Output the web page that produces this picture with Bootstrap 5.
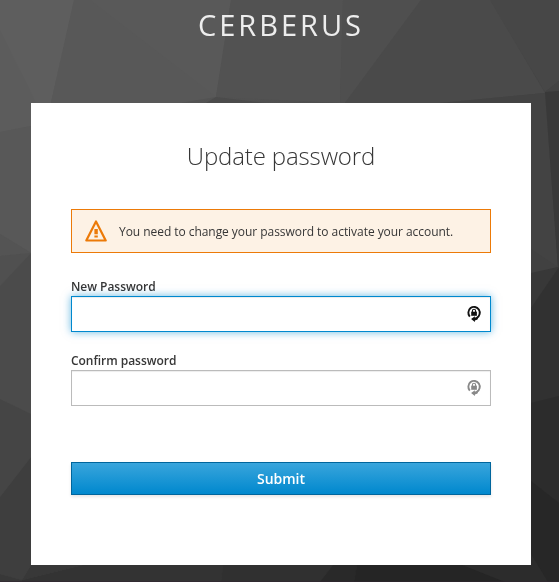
<!DOCTYPE html>
<html lang="en">
<head>
<meta charset="utf-8">
<meta name="viewport" content="width=device-width, initial-scale=1">
<title>Cerberus - Update password</title>
<link href="https://cdn.jsdelivr.net/npm/bootstrap@5.3.0/dist/css/bootstrap.min.css" rel="stylesheet">
<style>
body{font-family:"Open Sans",sans-serif;font-size:12px;line-height:20px;color:#363636;background:#4b4b4b;height:582px;overflow:hidden}
.backdrop{z-index:-1}
.brand{height:103px;padding-top:5px;padding-left:3px;font-size:29px;line-height:40px;letter-spacing:3px;color:#ededed;font-weight:400}
.login-card{width:500px;height:462px;margin-left:31px;padding:40px}
.login-title{font-size:24px;line-height:26px;font-weight:300;letter-spacing:-.14px;margin-bottom:40px;color:#363636}
.notice{height:44px;border:1px solid #ec7a08;background:#fdf2e5;border-radius:0;padding:0 13px;margin-bottom:24px}
.notice svg{margin-right:12px}
.notice span{padding-top:2px;letter-spacing:-.05px}
.field-label{font-weight:600;height:19px;line-height:19px;margin:0;letter-spacing:-.03px}
.field-row{margin-bottom:19px}
.field{height:36px;border:1px solid #bbb;border-radius:0;box-shadow:inset 0 1px 1px rgba(3,3,3,.075);padding-right:36px}
.field:focus,.field.active{border-color:#0088ce;box-shadow:inset 0 1px 1px rgba(3,3,3,.075),0 0 8px rgba(0,136,206,.6)}
.key-icon{right:9px;top:9px}
.submit{height:33px;margin-top:56px;padding:0;border:1px solid #00659c;border-radius:0;font-size:14px;font-weight:600;line-height:31px;color:#fff;background:linear-gradient(#39a5dc,#0088ce);box-shadow:0 2px 3px rgba(3,3,3,.1)}
.submit:hover{color:#fff;background:#0088ce}
</style>
</head>
<body>
<svg class="backdrop position-fixed top-0 start-0" width="559" height="582" viewBox="0 0 559 582" aria-hidden="true">
<defs><linearGradient id="g" x1="0" y1="0" x2="1" y2="1"><stop stop-color="#5f5f5f"/><stop offset=".5" stop-color="#484848"/><stop offset="1" stop-color="#262626"/></linearGradient></defs>
<path fill="url(#g)" d="M0 0h559v582H0z"/>
<path fill="#5e5e5e" d="M0 0h74L51 103 31 126 0 132z"/>
<path fill="#5c5c5c" d="M0 30 36 103v22L0 132z"/>
<path fill="#585858" d="M74 0h157l-15 97-36 6H51z"/>
<path fill="#595959" d="M90 0h141l-15 97z"/>
<path fill="#525252" d="M231 0h112l-3 103-124-6z"/>
<path fill="#4b4b4b" d="m216 97 50 6h-60z"/>
<path fill="#4f4f4f" d="M343 0h78l-76 103h-5z"/>
<path fill="#4a4a4a" d="M421 0h69l55 93-105 10h-95z"/>
<path fill="#474747" d="M490 0h69v81l-14 11z"/>
<path fill="#434343" d="m545 92 14-11v10z"/>
<path fill="#434343" d="m440 103 105-10 13 174-27 7V103z"/>
<path fill="#393939" d="m545 92 14-1v176h-1z"/>
<path fill="#414141" d="m531 249 27 18-27 6z"/>
<path fill="#383838" d="m531 273 27-6-27 41z"/>
<path fill="#313131" d="m531 308 28-41v129l-28 7z"/>
<path fill="#2c2c2c" d="m531 403 28-7v107l-28-22z"/>
<path fill="#272727" d="m531 481 28 22v79h-11l-17-28z"/>
<path fill="#2c2c2c" d="m531 554 17 28h-48l-38-17h69z"/>
<path fill="#585858" d="m0 132 31-6v127L0 234z"/>
<path fill="#545454" d="m0 234 31 19-31 3z"/>
<path fill="#505050" d="m0 256 31-3-31 33z"/>
<path fill="#4b4b4b" d="m0 286 31-33v161L0 399z"/>
<path fill="#454545" d="m0 399 31 15v43L0 497z"/>
<path fill="#3e3e3e" d="m0 497 31-40v108l-9 15L0 574z"/>
<path fill="#383838" d="m0 574 22 6h200v2H0zM31 565h52l-61 15z"/>
<path fill="#333" d="M83 565h140l-2 17H22v-2z"/>
<path fill="#303030" d="M223 565h110l-13 17h-99z"/>
<path fill="#292929" d="M333 565h24l-3 17h-34z"/>
<path fill="#252525" d="M357 565h105l43 17H354z"/>
<path fill="#302630" opacity=".6" d="M0 581h559v1H0z"/>
</svg>
<header class="brand text-center text-uppercase">Cerberus</header>
<main class="login-card bg-white">
<h1 class="login-title text-center">Update password</h1>
<div class="notice d-flex align-items-center" role="alert">
<svg class="flex-shrink-0" width="22" height="22" viewBox="0 0 22 22" aria-hidden="true"><path d="M11 1.5 20.7 20.5H1.3z" fill="none" stroke="#ec7a08" stroke-width="2.2" stroke-linejoin="round"/><path fill="#ec7a08" d="M9.4 9h3.4v5.2H9.4zM9.4 15.4h3.4v2H9.4z"/></svg>
<span>You need to change your password to activate your account.</span>
</div>
<form>
<svg class="d-none"><symbol id="lock" viewBox="0 0 16 18"><path d="M3.8 11.7A5.7 5.9 0 1 1 10.9 12.9L9 13.8" fill="none" stroke="currentColor" stroke-width="1.9"/><path d="M5.2 6.7h5.7v4.1H5.2z" fill="currentColor"/><path d="M6.4 7.2V5.9a1.6 1.6 0 0 1 3.2 0v1.3" fill="none" stroke="currentColor" stroke-width="1.1"/><path d="m5.1 14 3.8-2.7v1.7l3.3-.9-.7 2.5-2.6.8v1.7z" fill="currentColor"/></symbol></svg>
<label class="field-label d-block" for="new">New Password</label>
<div class="field-row position-relative"><input id="new" type="password" class="form-control field active"><svg class="key-icon position-absolute" width="16" height="18" color="#111"><use href="#lock"/></svg></div>
<label class="field-label d-block" for="confirm">Confirm password</label>
<div class="position-relative"><input id="confirm" type="password" class="form-control field"><svg class="key-icon position-absolute" width="16" height="18" color="#888"><use href="#lock"/></svg></div>
<button type="button" class="btn submit w-100">Submit</button>
</form>
</main>
<script src="https://cdn.jsdelivr.net/npm/bootstrap@5.3.0/dist/js/bootstrap.bundle.min.js"></script>
</body>
</html>
